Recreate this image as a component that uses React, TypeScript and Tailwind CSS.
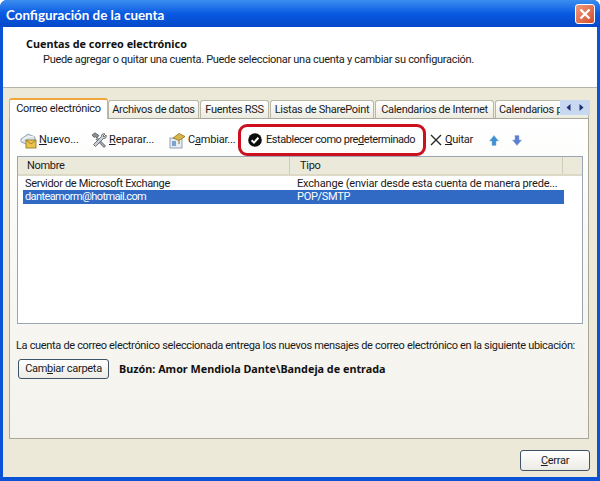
import React from 'react';

function NewIcon() {
  return (
    <svg width="17" height="17" viewBox="0 0 17 17" className="shrink-0">
      <path d="M1 7 L8 2 L15 5 L15 9 L8 13 L1 10 Z" fill="#d5dde6" stroke="#8a98a8" strokeWidth="0.8" />
      <path d="M2 9 C5 5 10 4 14 5" fill="none" stroke="#f5f8fb" strokeWidth="1.2" />
      <rect x="6" y="8" width="10" height="8" fill="#eac44e" stroke="#8c7420" strokeWidth="0.8" />
      <path d="M6 8 L11 12 L16 8" fill="none" stroke="#8c7420" strokeWidth="0.8" />
    </svg>
  );
}

function RepairIcon() {
  return (
    <svg width="17" height="17" viewBox="0 0 17 17" className="shrink-0">
      <path d="M1 3 L4 0.8 L8 3.5 L6 6 L4.5 4.8 L3 5.5 Z" fill="#8a8f96" stroke="#3e4349" strokeWidth="0.6" />
      <path d="M6 5.5 L14.5 14 L13 15.5 L4.8 7" fill="#a7adb4" stroke="#3e4349" strokeWidth="0.7" />
      <path d="M14 2 C12 1 10 2.5 10.5 4.5 L2.5 12.5 L4.5 14.5 L12.5 6.5 C14.5 7 16 5 15 3 L13 5 L12 4 Z" fill="#c9ced4" stroke="#3e4349" strokeWidth="0.7" />
    </svg>
  );
}

function ChangeIcon() {
  return (
    <svg width="17" height="17" viewBox="0 0 17 17" className="shrink-0">
      <rect x="1" y="6" width="12" height="10" fill="#e7edf4" stroke="#7e8fa3" strokeWidth="0.8" />
      <rect x="3" y="9" width="4" height="5" fill="#7ea3cc" />
      <path d="M4 6 L10 1.5 L16 4.5 L10 8.5 Z" fill="#d9b548" stroke="#8c7420" strokeWidth="0.8" />
      <path d="M10 8.5 L10 12" stroke="#8c7420" strokeWidth="1" />
    </svg>
  );
}

function CheckIcon() {
  return (
    <svg width="14" height="14" viewBox="0 0 14 14" className="shrink-0">
      <circle cx="7" cy="7" r="6.8" fill="#0d0d0d" />
      <path d="M3.6 7.2 L6 9.6 L10.4 4.8" fill="none" stroke="#ffffff" strokeWidth="2" />
    </svg>
  );
}

function QuitIcon() {
  return (
    <svg width="12" height="12" viewBox="0 0 12 12" className="shrink-0">
      <path d="M1 1 L11 11 M11 1 L1 11" stroke="#2a2a2a" strokeWidth="1.4" />
    </svg>
  );
}

function ArrowIcon({ down }: { down?: boolean }) {
  return (
    <svg width="10" height="11" viewBox="0 0 10 11" className="shrink-0">
      <path
        d={down ? 'M3 0.5 H7 V5 H9.5 L5 10.5 L0.5 5 H3 Z' : 'M5 0.5 L9.5 6 H7 V10.5 H3 V6 H0.5 Z'}
        fill={down ? '#5b7fd0' : '#3f8fd2'}
        stroke={down ? '#8ea6dc' : '#86b8e2'}
        strokeWidth="0.5"
      />
    </svg>
  );
}

function Tab({ label, w }: { label: string; w: string }) {
  return (
    <div className={`${w} h-[18px] pt-[1px] shrink-0 mr-[1px] border border-b-0 border-[#b9b7a8] rounded-t-[3px] bg-gradient-to-b from-white to-[#ecebe0] text-[#1c1c1c] flex items-center justify-center whitespace-nowrap overflow-hidden`}>
      {label}
    </div>
  );
}

const boldFont = 'font-bold text-[10.8px] tracking-normal font-["Noto_Sans"] text-[#111]';

export default function App() {
  return (
    <div
      className="w-[600px] h-[481px] bg-white overflow-hidden text-[11px] tracking-[-0.3px] leading-[14px] text-[#1a1a1a]"
      style={{ fontFamily: 'Roboto, "Noto Sans", sans-serif' }}
    >
      <div className="h-full flex flex-col rounded-t-[7px] overflow-hidden bg-[#0a52d6]">
        {/* title bar */}
        <div className="h-[27px] shrink-0 flex items-center justify-between pl-[6px] pr-[5px] bg-gradient-to-b from-[#3b8df0] via-[#0a5ae2] to-[#0448c8]">
          <span className="text-white font-bold text-[13.4px] tracking-normal pt-[2px] font-['Lato']">Configuración de la cuenta</span>
          <div className="w-[20px] h-[20px] rounded-[3px] border border-white bg-gradient-to-br from-[#ee9a7c] to-[#d4492a] flex items-center justify-center">
            <svg width="12" height="12" viewBox="0 0 12 12">
              <path d="M1.5 1.5 L10.5 10.5 M10.5 1.5 L1.5 10.5" stroke="#ffffff" strokeWidth="2.4" />
            </svg>
          </div>
        </div>

        <div className="flex-1 min-h-0 mx-[3px] mb-[4px] flex flex-col bg-[#ece9d8]">
          {/* header */}
          <div className="h-[61px] shrink-0 bg-white border-b border-[#b5b3a5] pl-[23px] pt-[10px]">
            <div className={boldFont}>Cuentas de correo electrónico</div>
            <div className="pl-[17px] mt-[2px]">Puede agregar o quitar una cuenta. Puede seleccionar una cuenta y cambiar su configuración.</div>
          </div>

          {/* tabs */}
          <div className="relative h-[30px] shrink-0 pl-[6px] pr-[8px] flex items-end">
            <div className="w-[99px] h-[21px] pb-[2px] shrink-0 -mb-px z-10 border border-b-0 border-[#b9b7a8] border-t-[2px] border-t-[#f0a63a] rounded-t-[3px] bg-white flex items-center justify-center whitespace-nowrap">
              Correo electrónico
            </div>
            <Tab label="Archivos de datos" w="w-[91px]" />
            <Tab label="Fuentes RSS" w="w-[69px]" />
            <Tab label="Listas de SharePoint" w="w-[104px]" />
            <Tab label="Calendarios de Internet" w="w-[119px]" />
            <div className="flex-1 h-[18px] pt-[1px] border border-b-0 border-[#b9b7a8] rounded-t-[3px] bg-gradient-to-b from-white to-[#ecebe0] pl-[3px] flex items-center whitespace-nowrap overflow-hidden">
              Calendarios p
            </div>
            <div className="absolute right-[7px] bottom-[3px] w-[30px] h-[15px] bg-[#c8d8f0] flex items-center justify-center gap-[8px]">
              <svg width="5" height="7" viewBox="0 0 5 7"><path d="M4.5 0 L0.5 3.5 L4.5 7 Z" fill="#1c2f70" /></svg>
              <svg width="5" height="7" viewBox="0 0 5 7"><path d="M0.5 0 L4.5 3.5 L0.5 7 Z" fill="#1c2f70" /></svg>
            </div>
          </div>

          {/* panel */}
          <div className="h-[321px] shrink-0 ml-[6px] mr-[8px] border border-[#a9a798] bg-gradient-to-b from-white via-[#f8f7f3] to-[#f3f2ec] flex flex-col">
            {/* toolbar */}
            <div className="h-[37px] shrink-0 flex items-center pl-[10px] pt-[5px]">
              <div className="flex items-center gap-[2px] w-[71px] whitespace-nowrap">
                <NewIcon />
                <span className="tracking-[0px]"><u>N</u>uevo...</span>
              </div>
              <div className="flex items-center gap-[1px] w-[78px] whitespace-nowrap">
                <RepairIcon />
                <span className="tracking-[-0.1px]"><u>R</u>eparar...</span>
              </div>
              <div className="flex items-center gap-[2px] w-[69px] whitespace-nowrap">
                <ChangeIcon />
                <span className="tracking-[-0.2px]">C<u>a</u>mbiar...</span>
              </div>
              <div className="w-[188px] h-[32px] shrink-0 z-10 border-[3px] border-[#cc1020] rounded-[9px] flex items-center gap-[4px] pl-[7px] whitespace-nowrap">
                <CheckIcon />
                <span className="tracking-[-0.45px]">Establecer como pre<u>d</u>eterminado</span>
              </div>
              <div className="flex items-center gap-[3px] ml-[4px] w-[59px] whitespace-nowrap">
                <QuitIcon />
                <span><u>Q</u>uitar</span>
              </div>
              <ArrowIcon />
              <div className="w-[13px]" />
              <ArrowIcon down />
            </div>

            {/* list */}
            <div className="h-[168px] shrink-0 ml-[7px] mr-[5px] border border-[#9aa5b5] bg-white">
              <div className="h-[19px] bg-[#ebe9da] border-b-[2px] border-[#dcd9c6] flex items-center">
                <div className="w-[272px] pl-[9px] pt-[1px] border-r border-[#cfccb8] h-full flex items-center">Nombre</div>
                <div className="w-[273px] pl-[10px] pt-[1px] border-r border-[#cfccb8] h-full flex items-center">Tipo</div>
              </div>
              <div className="h-[14px] ml-[6px] mr-[19px] pt-[1px] flex items-center whitespace-nowrap">
                <div className="w-[272px] shrink-0 pl-[1px] tracking-[-0.35px]">Servidor de Microsoft Exchange</div>
                <div className="pl-[1px] tracking-[-0.17px]">Exchange (enviar desde esta cuenta de manera prede...</div>
              </div>
              <div className="h-[14px] ml-[5px] mr-[18px] flex items-center whitespace-nowrap bg-[#316ac5] text-white">
                <div className="w-[273px] shrink-0 pl-[2px] tracking-[-0.6px]">danteamorm@hotmail.com</div>
                <div className="pl-[1px]">POP/SMTP</div>
              </div>
            </div>

            {/* delivery */}
            <div className="mt-[15px] pl-[6px] whitespace-nowrap tracking-[-0.33px]">La cuenta de correo electrónico seleccionada entrega los nuevos mensajes de correo electrónico en la siguiente ubicación:</div>
            <div className="mt-[6px] pl-[8px] flex items-center">
              <div className="w-[91px] h-[20px] rounded-[3px] border border-[#3f5368] bg-gradient-to-b from-white to-[#ecebe4] flex items-center justify-center whitespace-nowrap">
                <span>Cam<u>b</u>iar carpeta</span>
              </div>
              <div className={`ml-[10px] ${boldFont}`}>Buzón: Amor Mendiola Dante\Bandeja de entrada</div>
            </div>
          </div>

          {/* footer */}
          <div className="flex-1 flex justify-end items-center pr-[7px] pt-[4px]">
            <div className="w-[70px] h-[21px] rounded-[3px] border border-[#3f5368] bg-gradient-to-b from-white to-[#ecebe4] flex items-center justify-center">
              <span className="pt-[1px]"><u>C</u>errar</span>
            </div>
          </div>
        </div>
      </div>
    </div>
  );
}
